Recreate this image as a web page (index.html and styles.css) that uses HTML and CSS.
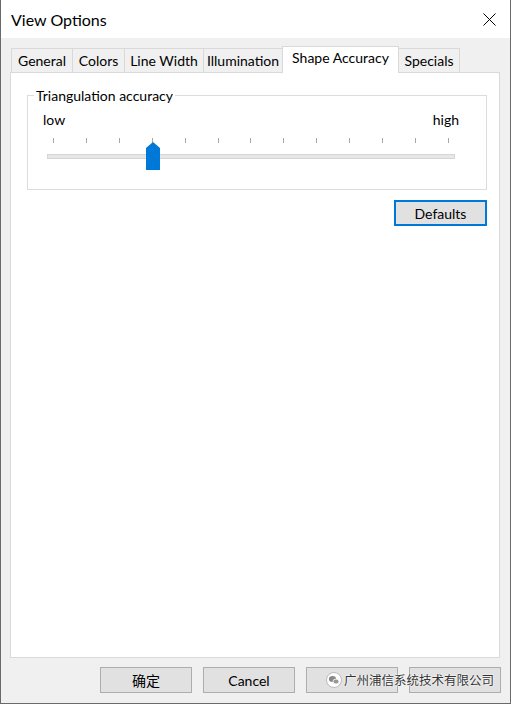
FILE: index.html
```html
<!DOCTYPE html>
<html>
<head>
    <title>View Options</title>
    <meta name="viewport" content="width=device-width, initial-scale=1.0">
    <link rel="stylesheet" href="styles.css">
</head>
<body>
    <div class="window">
        <div class="titlebar">
            <span class="title">View Options</span>
            <svg class="close" width="13" height="13" viewBox="0 0 13 13">
                <path d="M0.5 0.5 L12.5 12.5 M12.5 0.5 L0.5 12.5" stroke="#000" stroke-width="1" fill="none"/>
            </svg>
        </div>

        <div class="content">
            <div class="tabs">
                <div class="tab" style="width:61px">General</div>
                <div class="tab" style="width:52px">Colors</div>
                <div class="tab" style="width:79px">Line Width</div>
                <div class="tab" style="width:79px">Illumination</div>
                <div class="tab active" style="width:117px">Shape Accuracy</div>
                <div class="tab" style="width:61px">Specials</div>
            </div>

            <div class="panel">
                <fieldset class="group">
                    <legend>Triangulation accuracy</legend>
                    <div class="range-labels">
                        <span>low</span>
                        <span>high</span>
                    </div>
                    <div class="ticks">
                        <i></i><i></i><i></i><i></i><i></i><i></i><i></i>
                        <i></i><i></i><i></i><i></i><i></i><i></i>
                    </div>
                    <div class="slider">
                        <div class="track"></div>
                        <svg class="thumb" width="14" height="28" viewBox="0 0 14 28">
                            <path d="M7 0 L14 6 L14 28 L0 28 L0 6 Z" fill="#0078d7"/>
                        </svg>
                    </div>
                </fieldset>
                <div class="panel-actions">
                    <button class="button default">Defaults</button>
                </div>
            </div>

            <div class="footer">
                <button class="button">确定</button>
                <button class="button">Cancel</button>
                <button class="button"></button>
                <button class="button"></button>
                <div class="watermark">
                    <svg width="16" height="16" viewBox="0 0 16 16">
                        <circle cx="8" cy="8" r="7.5" fill="#fff" stroke="#bbb"/>
                        <ellipse cx="6.5" cy="7" rx="3.6" ry="3" fill="#888"/>
                        <ellipse cx="10" cy="9.5" rx="3" ry="2.5" fill="#999" stroke="#fff" stroke-width="0.8"/>
                    </svg>
                    <span>广州浦信系统技术有限公司</span>
                </div>
            </div>
        </div>
    </div>
</body>
</html>
```

FILE: styles.css
```css
        body {
            margin: 0;
            background-color: #fff;
            font-family: Lato, 'Noto Sans', sans-serif;
            font-size: 14px;
            color: #000;
        }

        .window {
            width: 511px;
            height: 704px;
            box-sizing: border-box;
            border: 1px solid #6a6a6a;
            border-top: none;
            background-color: #f0f0f0;
            display: flex;
            flex-direction: column;
        }

        .titlebar {
            height: 38px;
            flex-shrink: 0;
            background-color: #fff;
            display: flex;
            align-items: center;
            justify-content: space-between;
            padding: 0 14px 0 10px;
        }

        .title {
            font-size: 16px;
            margin-top: 1px;
        }

        .content {
            flex: 1;
            display: flex;
            flex-direction: column;
            padding: 8px 10px 0 9px;
            position: relative;
        }

        .tabs {
            display: flex;
            align-items: flex-end;
            height: 26px;
            margin-left: 1px;
        }

        .tab {
            box-sizing: border-box;
            height: 24px;
            border: 1px solid #d9d9d9;
            border-bottom: none;
            border-right: none;
            background-color: #f0f0f0;
            text-align: center;
            line-height: 23px;
        }

        .tab.active {
            height: 27px;
            margin-bottom: -1px;
            background-color: #fff;
            border-right: 1px solid #d9d9d9;
            line-height: 22px;
            position: relative;
            z-index: 1;
        }

        .tab.active + .tab {
            border-left: none;
        }

        .tab:last-child {
            border-right: 1px solid #d9d9d9;
        }

        .panel {
            height: 586px;
            box-sizing: border-box;
            background-color: #fff;
            border: 1px solid #d9d9d9;
            padding: 14px 12px 0 16px;
        }

        .group {
            margin: 0;
            height: 103px;
            box-sizing: border-box;
            border: 1px solid #dcdcdc;
            padding: 0 27px 0 0;
        }

        .group legend {
            padding: 0 2px;
            margin-left: 6px;
            line-height: 17px;
        }

        .range-labels {
            display: flex;
            justify-content: space-between;
            padding-left: 15px;
            margin-top: 7px;
            line-height: 18px;
        }

        .ticks {
            display: flex;
            justify-content: space-between;
            margin: 9px 0 0 25px;
            width: 396px;
            height: 5px;
        }

        .ticks i {
            width: 1px;
            background-color: #a8a8a8;
        }

        .slider {
            display: grid;
            margin: -1px 0 0 19px;
            width: 408px;
        }

        .slider > * {
            grid-area: 1 / 1;
        }

        .track {
            margin-top: 12px;
            height: 5px;
            box-sizing: border-box;
            background-color: #e7e7e7;
            border: 1px solid #d6d6d6;
        }

        .thumb {
            margin-left: 99px;
        }

        .panel-actions {
            display: flex;
            justify-content: flex-end;
            margin-top: 10px;
        }

        .button {
            font-family: Lato, 'Noto Sans CJK SC', sans-serif;
            font-size: 14px;
            width: 92px;
            height: 26px;
            box-sizing: border-box;
            background-color: #e1e1e1;
            border: 1px solid #adadad;
            color: #000;
            padding: 0;
        }

        .panel-actions .button {
            width: 93px;
        }

        .button.default {
            border: 2px solid #0078d7;
        }

        .footer {
            flex: 1;
            display: flex;
            justify-content: flex-end;
            align-items: flex-start;
            gap: 11px;
            padding-top: 9px;
            margin-right: -1px;
        }

        .watermark {
            position: absolute;
            left: 325px;
            top: 632px;
            display: flex;
            align-items: center;
            gap: 2px;
            font-family: 'Noto Sans CJK SC', sans-serif;
            font-size: 12.5px;
            color: #333;
            text-shadow: 0 0 2px #fff, 0 0 2px #fff;
        }
```
